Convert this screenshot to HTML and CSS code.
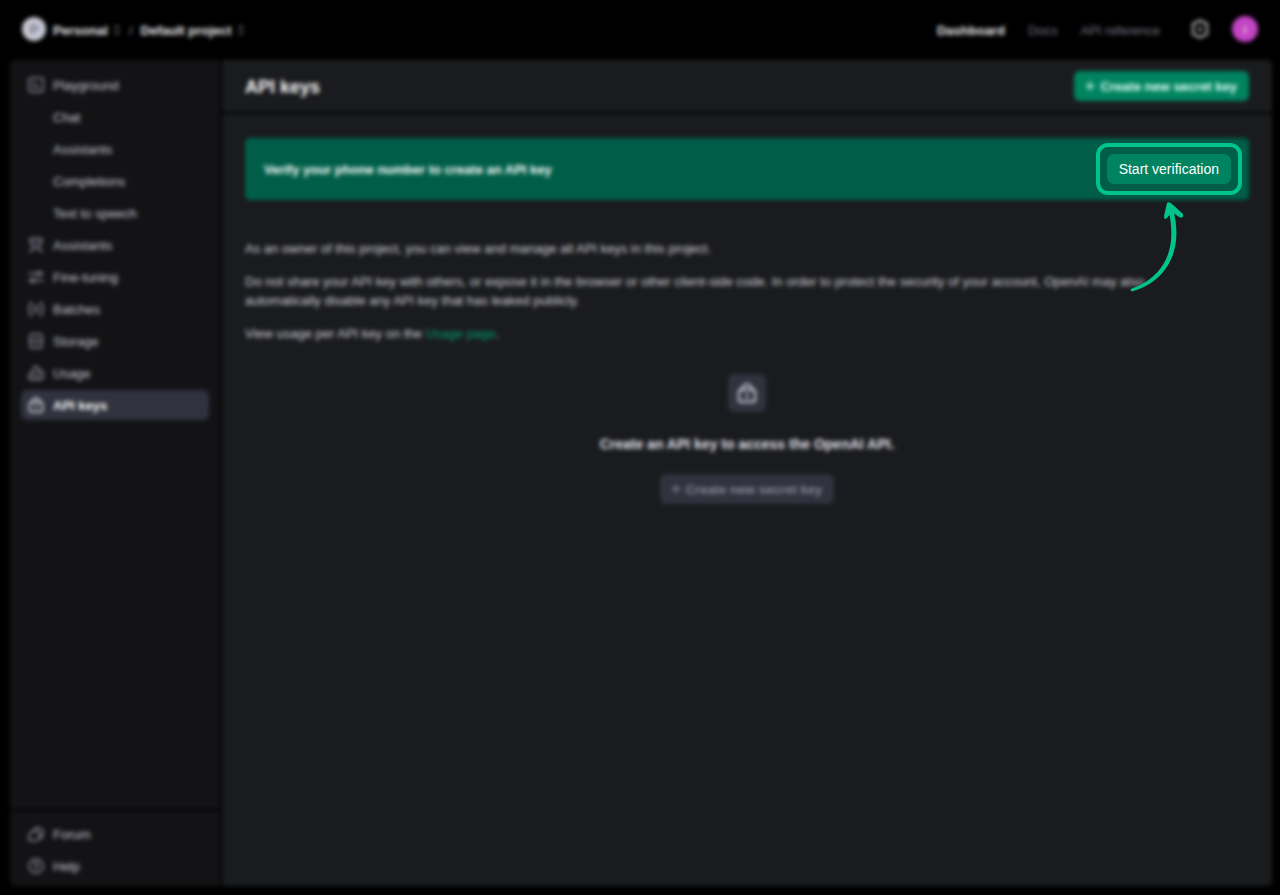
FILE: index.html
```html
<!DOCTYPE html>
<html lang="en">
<head>
	<meta charset="utf-8">
	<title>API keys</title>
	<link rel="stylesheet" href="styles.css">
</head>
<body>
	<header class="topbar">
		<span class="avatar org">P</span>
		<button class="switch" type="button">Personal
			<svg class="updown" viewBox="0 0 8 12"><path d="M2 4l2-2 2 2M2 8l2 2 2-2"/></svg>
		</button>
		<span class="slash">/</span>
		<button class="switch" type="button">Default project
			<svg class="updown" viewBox="0 0 8 12"><path d="M2 4l2-2 2 2M2 8l2 2 2-2"/></svg>
		</button>
		<nav class="links">
			<a href="#" class="on">Dashboard</a>
			<a href="#">Docs</a>
			<a href="#">API reference</a>
		</nav>
		<button class="gear" type="button" aria-label="Settings">
			<svg viewBox="0 0 20 20"><path d="M10 1.500l7 3.500v10l-7 3.500-7-3.500V5z"/><circle class="dot" cx="10" cy="10" r="2"/></svg>
		</button>
		<span class="avatar user">i</span>
	</header>

	<div class="panel">
		<aside class="sidebar">
			<nav class="menu">
				<a href="#"><svg viewBox="0 0 16 16"><rect x="1" y="1" width="14" height="14" rx="2"/><path d="M5 5l3 3-3 3M9 11h2"/></svg>Playground</a>
				<a href="#" class="sub">Chat</a>
				<a href="#" class="sub">Assistants</a>
				<a href="#" class="sub">Completions</a>
				<a href="#" class="sub">Text to speech</a>
				<a href="#"><svg viewBox="0 0 16 16"><path d="M1.500 2.500Q8 0 14.500 2.500M3 3v3a5 5 0 0 0 10 0V3M5.500 5.500h5M2 15l4-4h4l4 4"/></svg>Assistants</a>
				<a href="#"><svg viewBox="0 0 16 16"><path d="M1 4.500h8M13 4.500h2M1 11.500h2M7 11.500h8"/><circle cx="11" cy="4.500" r="2"/><circle cx="5" cy="11.500" r="2"/></svg>Fine-tuning</a>
				<a href="#"><svg viewBox="0 0 16 16"><path d="M3.500 1C1.500 1 2.500 4 2 6L.8 8 2 10c.5 2-.5 5 1.500 5M12.500 1c2 0 1 3 1.500 5l1.200 2L14 10c-.5 2 .5 5-1.500 5M6 5h4M6 8h4M6 11h4"/></svg>Batches</a>
				<a href="#"><svg viewBox="0 0 16 16"><rect x="2" y="1" width="12" height="14" rx="3"/><path d="M2 8h12M7 4.500h2M7 11.500h2"/></svg>Storage</a>
				<a href="#"><svg viewBox="0 0 16 16"><path d="M5.500 14.500v-11a2 2 0 0 1 2-2h1a2 2 0 0 1 2 2v11M5.500 8H3a2 2 0 0 0-2 2v2.500a2 2 0 0 0 2 2h10a2 2 0 0 0 2-2V8a2 2 0 0 0-2-2h-2.500"/></svg>Usage</a>
				<a href="#" class="on"><svg viewBox="0 0 16 16"><rect x="1.500" y="5.500" width="13" height="9.500" rx="1.500"/><path d="M3.500 5.500C4.500 3 6 1 8 1s3.500 2 4.500 4.500M8 9v2.500"/></svg>API keys</a>
			</nav>
			<nav class="menu bottom">
				<a href="#"><svg viewBox="0 0 16 16"><path d="M5.500 5a5 5 0 0 1 9.500 1c0 2-.8 3-.8 3l.3 2.500-3.500.5"/><path d="M6 5a5 5 0 1 1-2 9l-3 .5.500-3A5 5 0 0 1 6 5z"/></svg>Forum</a>
				<a href="#"><svg viewBox="0 0 16 16"><circle cx="8" cy="8" r="7"/><path d="M6 6.500a2 2 0 1 1 2.500 2L8 9.500M8 11v1"/></svg>Help</a>
			</nav>
		</aside>

		<main class="main">
			<div class="head">
				<h1>API keys</h1>
				<button class="btn green" type="button"><svg viewBox="0 0 10 10"><path d="M5 1v8M1 5h8"/></svg>Create new secret key</button>
			</div>
			<div class="content">
				<div class="banner">
					<strong>Verify your phone number to create an API key</strong>
					<div class="callout">
						<button class="btn verify" type="button">Start verification</button>
						<svg class="arrow" viewBox="0 0 56 92">
							<path class="tail" d="M2 90.500C38 80 54 48 43 8L38.500 9C48 50 33 76 2 87.500Q-1 89 2 90.500z"/>
							<path class="tip" d="M37 2Q39 0 42 3L53 13Q54 18 49 16L42 11L37 17Q34 20 34 15z"/>
						</svg>
					</div>
				</div>
				<p>As an owner of this project, you can view and manage all API keys in this project.</p>
				<p>Do not share your API key with others, or expose it in the browser or other client-side code. In order to protect the security of your account, OpenAI may also automatically disable any API key that has leaked publicly.</p>
				<p>View usage per API key on the <a href="#">Usage page</a>.</p>

				<section class="empty">
					<span class="lock"><svg viewBox="0 0 16 16"><rect x="1.500" y="5.500" width="13" height="9.500" rx="1.500"/><path d="M3.500 5.500C4.500 3 6 1 8 1s3.500 2 4.500 4.500M8 9v2.500"/></svg></span>
					<h2>Create an API key to access the OpenAI API.</h2>
					<button class="btn gray" type="button"><svg viewBox="0 0 10 10"><path d="M5 1v8M1 5h8"/></svg>Create new secret key</button>
				</section>
			</div>
		</main>
	</div>

	<div class="veil"></div>
</body>
</html>
```

FILE: styles.css
```css
*{
	box-sizing: border-box;
}

body{
	margin: 0;
	min-height: 100vh;
	display: flex;
	flex-direction: column;
	padding: 0 8px 9px 10px;
	background: #000;
	color: #d0d0da;
	font: 13px/19px "Liberation Sans", Arial, sans-serif;
}

a{
	color: inherit;
	text-decoration: none;
}

button{
	border: 0;
	padding: 0;
	background: none;
	color: inherit;
	font: inherit;
	cursor: pointer;
}

svg{
	flex: none;
	fill: none;
	stroke: currentColor;
	stroke-width: 1.5;
	stroke-linecap: round;
	stroke-linejoin: round;
}

/* soft focus over everything except the callout */
.veil{
	position: absolute;
	inset: 0;
	z-index: 1;
	backdrop-filter: blur(2px);
	pointer-events: none;
}

.topbar{
	display: flex;
	align-items: center;
	height: 60px;
	padding: 0 14px 2px 12px;
}

.avatar{
	display: flex;
	align-items: center;
	justify-content: center;
	width: 26px;
	height: 26px;
	border-radius: 50%;
}

.org{
	width: 24px;
	height: 24px;
	margin-right: 7px;
	background: #c5c5d2;
	color: #505062;
}

.user{
	background: #c344c3;
	color: #fff;
}

.switch{
	display: flex;
	align-items: center;
	gap: 5px;
	padding-top: 2px;
	color: #ececf1;
	font-weight: bold;
}

.updown{
	width: 8px;
	height: 12px;
	color: #6e6e80;
}

.slash{
	margin: 2px 8px 0;
	color: #8e8ea0;
}

.links{
	display: flex;
	gap: 23px;
	margin-left: auto;
	padding-top: 2px;
	color: #767684;
}

.links .on{
	color: #ececf1;
	font-weight: bold;
}

.gear{
	width: 20px;
	height: 20px;
	margin: 0 22px 0 30px;
	color: #c0c0c4;
}

.gear svg{
	display: block;
	width: 20px;
	height: 20px;
	stroke-width: 2;
}

.gear .dot{
	fill: currentColor;
	stroke: none;
}

.panel{
	flex: 1;
	display: flex;
	border-radius: 5px;
	overflow: hidden;
}

.sidebar{
	display: flex;
	flex-direction: column;
	justify-content: space-between;
	width: 212px;
	flex: none;
	background: #131316;
	border-right: 2px solid #000;
}

.menu{
	display: flex;
	flex-direction: column;
	gap: 2px;
	padding: 10px 11px;
}

.menu a{
	display: flex;
	align-items: center;
	gap: 9px;
	height: 30px;
	padding: 0 7px;
	border-radius: 6px;
	color: #c5c5d2;
}

.menu .sub{
	padding-left: 32px;
}

.menu svg{
	width: 16px;
	height: 16px;
	color: #8e8ea0;
}

.menu .on{
	background: #30323e;
	color: #fff;
	font-weight: bold;
}

.menu .on svg{
	color: #ececf1;
}

.bottom{
	padding: 8px 11px 5px;
	border-top: 2px solid #000;
}

.main{
	flex: 1;
	min-width: 0;
	background: #1a1b1e;
}

.head{
	display: flex;
	align-items: center;
	justify-content: space-between;
	height: 54px;
	padding: 0 23px;
	border-bottom: 2px solid #000;
}

h1{
	margin: 2px 0 0;
	color: #fff;
	font-size: 18px;
	line-height: 24px;
}

.btn{
	display: inline-flex;
	align-items: center;
	gap: 5px;
	height: 30px;
	padding: 0 12px 0 11px;
	border-radius: 6px;
	font-weight: bold;
}

.btn svg{
	width: 10px;
	height: 10px;
}

.green{
	background: #008360;
	color: #e0fff6;
}

.gray{
	background: #30323e;
	color: #868796;
}

.content{
	padding: 24px 23px;
}

.banner{
	display: flex;
	align-items: center;
	justify-content: space-between;
	height: 62px;
	margin-bottom: 39px;
	padding: 0 7px 0 19px;
	border-radius: 5px;
	background: #005e48;
	color: #fff;
}

.callout{
	position: relative;
	z-index: 2;
	padding: 7px;
	border: 4px solid #00c48c;
	border-radius: 12px;
}

.verify{
	display: block;
	padding: 0 12px;
	border-radius: 7px;
	background: #008360;
	color: #fff;
	font-size: 14px;
	font-weight: normal;
}

.arrow{
	position: absolute;
	top: 54px;
	right: 52px;
	width: 56px;
	height: 92px;
}

.arrow path{
	fill: #00c48c;
	stroke: none;
}

p{
	max-width: 960px;
	margin: 0 0 14px;
}

p a{
	color: #00996f;
}

.empty{
	display: flex;
	flex-direction: column;
	align-items: center;
	padding-top: 17px;
}

.lock{
	display: flex;
	align-items: center;
	justify-content: center;
	width: 38px;
	height: 38px;
	border-radius: 6px;
	background: #30323e;
	color: #e0e0ea;
}

.lock svg{
	width: 20px;
	height: 20px;
}

h2{
	margin: 22px 0 20px;
	color: #e4e4ee;
	font-size: 14px;
	line-height: 20px;
}
```
